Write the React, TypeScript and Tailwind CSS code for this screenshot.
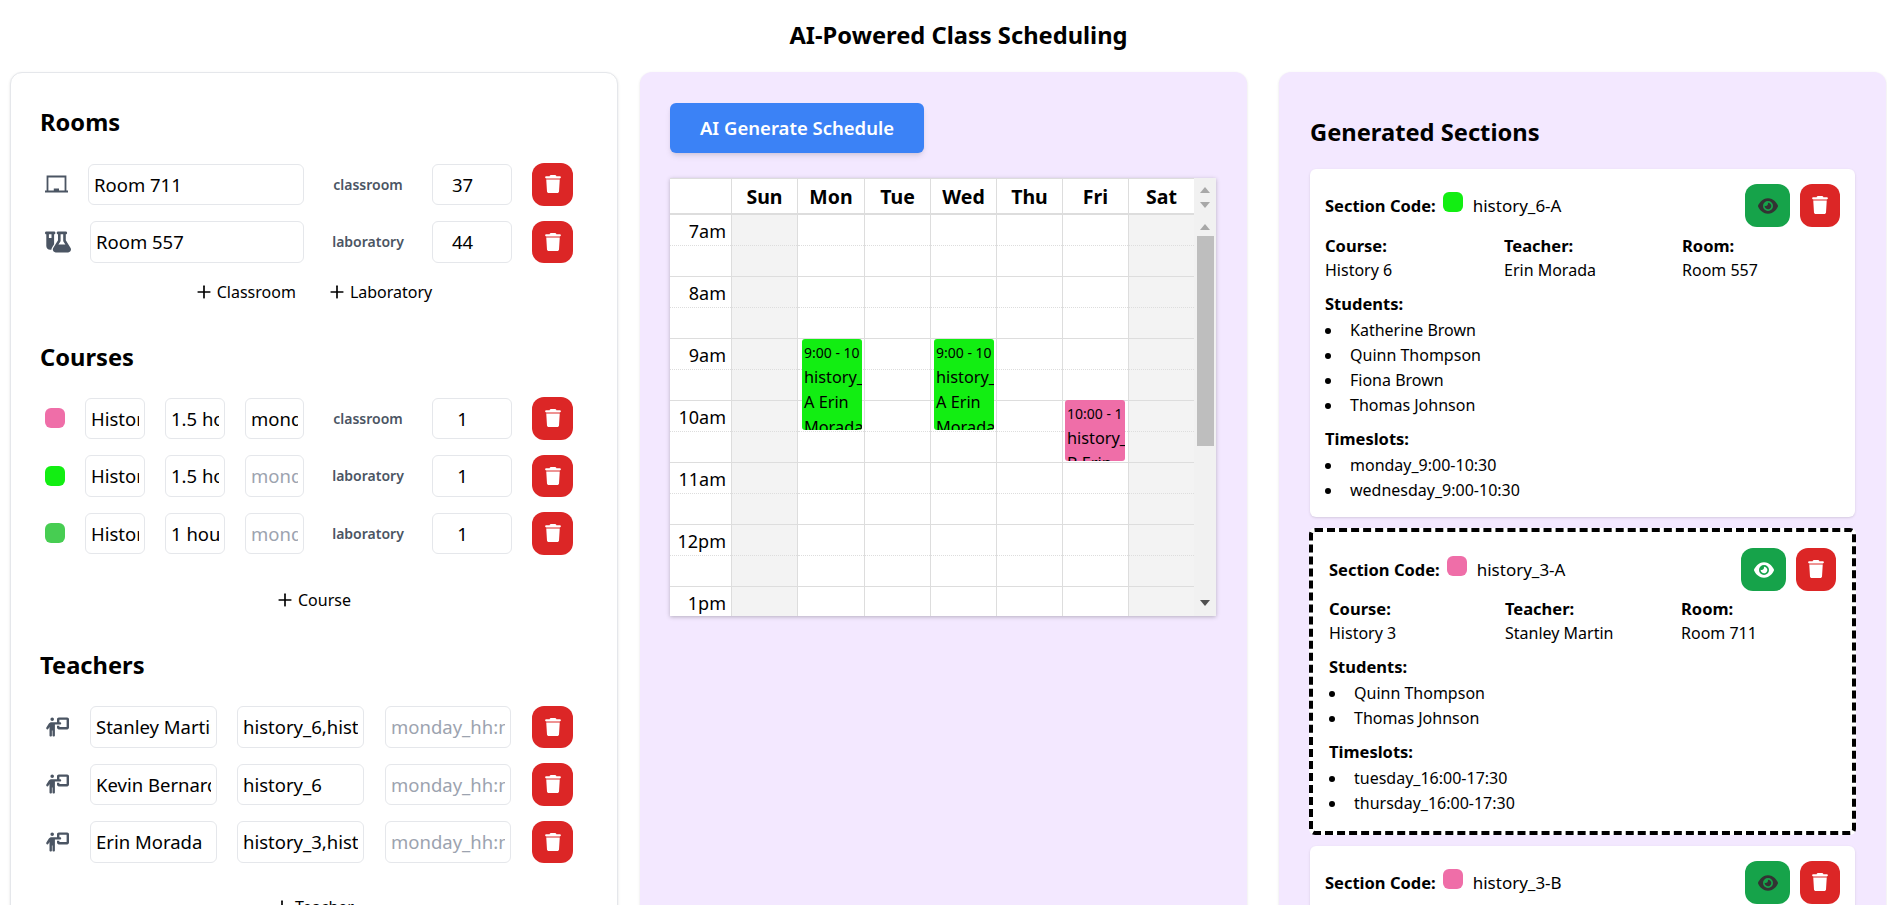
import React from "react";
import { FaTrash, FaEye, FaFlaskVial, FaPersonChalkboard } from "react-icons/fa6";
import { Plus } from "lucide-react";

const fontStyle = "font-['Noto_Sans',sans-serif]";
const inputCls =
  "min-w-0 h-[41.5px] border border-[#e5e7eb] rounded-md px-[5px] text-[18.5px] text-black placeholder:text-[#9ca3af] bg-white outline-none";

function TrashBtn({ extra = "w-[41px]" }: { extra?: string }) {
  return (
    <button className={`${extra} h-[42.5px] flex-none rounded-xl bg-[#dc2626] flex items-center justify-center text-white`}>
      <FaTrash size={18} />
    </button>
  );
}

function LaptopIcon() {
  return (
    <svg width="23" height="18" viewBox="0 0 23 18" className="text-[#4b5563]" fill="none">
      <path d="M2.5 16V1.5H20.5V16" stroke="currentColor" strokeWidth="1.8" />
      <path d="M0 15.6H8.8V13.4H14V15.6H23V17.6H0Z" fill="currentColor" />
    </svg>
  );
}

function Label({ children }: { children: React.ReactNode }) {
  return <div className="w-[88px] flex-none text-center text-[14px] font-semibold text-[#4b5563]">{children}</div>;
}

function Capacity({ value }: { value: string }) {
  return <input readOnly value={value} className={`${inputCls} w-[80px] flex-none text-center pr-[24px]`} />;
}

function Swatch({ color }: { color: string }) {
  return <div className={`w-5 h-5 rounded-md flex-none ${color}`} />;
}

function AddBtn({ label }: { label: string }) {
  return (
    <button className="flex items-center gap-[3px] text-[16px] text-black">
      <Plus size={20} strokeWidth={2} />
      {label}
    </button>
  );
}

function RoomRow({ icon, w, name, type, cap, ml }: { icon: React.ReactNode; w: string; name: string; type: string; cap: string; ml: string }) {
  return (
    <div className="flex items-center h-[42.5px]">
      <div className={`${ml} flex-none flex items-center pl-[5px]`}>{icon}</div>
      <input readOnly value={name} className={`${inputCls} ${w} flex-none`} />
      <div className="w-[128px] flex-none flex justify-center"><Label>{type}</Label></div>
      <Capacity value={cap} />
      <div className="w-5 flex-none" />
      <TrashBtn />
    </div>
  );
}

function CourseRow({ color, name, dur, day, type }: { color: string; name: string; dur: string; day: string; type: string }) {
  return (
    <div className="flex items-center h-[42.5px]">
      <div className="w-[45px] flex-none pl-[5px]"><Swatch color={color} /></div>
      <div className="flex gap-5 flex-none">
        <input readOnly value={name} className={`${inputCls} w-[60px]`} />
        <input readOnly value={dur} className={`${inputCls} w-[60px]`} />
        <input readOnly value={day} placeholder="monday_hh:mm-hh:mm" className={`${inputCls} w-[59px]`} />
      </div>
      <div className="w-[128px] flex-none flex justify-center"><Label>{type}</Label></div>
      <Capacity value="1" />
      <div className="w-5 flex-none" />
      <TrashBtn />
    </div>
  );
}

function TeacherRow({ name, courses }: { name: string; courses: string }) {
  return (
    <div className="flex items-center h-[42.5px]">
      <div className="w-[50px] flex-none pl-[5px] text-[#4b5563]"><FaPersonChalkboard size={24} /></div>
      <input readOnly value={name} className={`${inputCls} w-[127px] flex-none`} />
      <input readOnly value={courses} className={`${inputCls} ml-5 w-[127px] flex-none`} />
      <input readOnly placeholder="monday_hh:mm-hh:mm" className={`${inputCls} ml-[21px] w-[126px] flex-none`} />
      <div className="w-[21px] flex-none" />
      <TrashBtn />
    </div>
  );
}

function Heading({ children, className = "" }: { children: React.ReactNode; className?: string }) {
  return <h2 className={`text-[23.7px] leading-8 font-bold text-black ${className}`}>{children}</h2>;
}

function LeftPanel() {
  return (
    <div className="w-[608px] flex-none bg-white border border-[#e5e7eb] rounded-xl shadow-sm pt-[33px] pl-[29px]">
      <Heading>Rooms</Heading>
      <div className="mt-[25px] flex flex-col gap-[15px]">
        <RoomRow icon={<LaptopIcon />} ml="w-[48px]" w="w-[216px]" name="Room 711" type="classroom" cap="37" />
        <RoomRow icon={<FaFlaskVial size={26} className="text-[#4b5563]" />} ml="w-[50px]" w="w-[214px]" name="Room 557" type="laboratory" cap="44" />
      </div>
      <div className="mt-[17px] h-[24px] flex justify-center gap-[31px] pr-[31px]">
        <AddBtn label="Classroom" />
        <AddBtn label="Laboratory" />
      </div>
      <Heading className="mt-[37px]">Courses</Heading>
      <div className="mt-[24px] flex flex-col gap-[15px]">
        <CourseRow color="bg-[#ef6ea8]" name="History 3" dur="1.5 hours" day="monday_9:00" type="classroom" />
        <CourseRow color="bg-[#12ee12]" name="History 6" dur="1.5 hours" day="" type="laboratory" />
        <CourseRow color="bg-[#47cd52]" name="History 7" dur="1 hour" day="" type="laboratory" />
      </div>
      <div className="mt-[33px] h-[24px] flex justify-center pr-[31px]">
        <AddBtn label="Course" />
      </div>
      <Heading className="mt-[37px]">Teachers</Heading>
      <div className="mt-[25px] flex flex-col gap-[15px]">
        <TeacherRow name="Stanley Martin" courses="history_6,history_3" />
        <TeacherRow name="Kevin Bernard" courses="history_6" />
        <TeacherRow name="Erin Morada" courses="history_3,history_6" />
      </div>
      <div className="mt-[32px] h-[24px] flex justify-center pr-[31px]">
        <AddBtn label="Teacher" />
      </div>
    </div>
  );
}

const days = ["Sun", "Mon", "Tue", "Wed", "Thu", "Fri", "Sat"];
const hours = ["7am", "8am", "9am", "10am", "11am", "12pm", "1pm"];

function Event({ color, pos, time, lines }: { color: string; pos: string; time: string; lines: string[] }) {
  return (
    <div className={`absolute w-[60px] ${pos} ${color} rounded-[3px] overflow-hidden pl-[2px] pt-[1px] text-black`}>
      <div className="w-[56px] text-[14px] leading-[25px] whitespace-nowrap overflow-hidden">{time}</div>
      {lines.map((l) => (
        <div key={l} className="text-[16.3px] leading-[25px] whitespace-nowrap">{l}</div>
      ))}
    </div>
  );
}

function DayColumn({ day }: { day: string }) {
  const weekend = day === "Sun" || day === "Sat";
  return (
    <div className={`relative flex-none ${day === "Mon" ? "w-[67px]" : "w-[66px]"} border-l border-[#ddd] ${weekend ? "bg-[#f3f3f3]" : "bg-white"}`}>
      {hours.map((h) => (
        <React.Fragment key={h}>
          <div className="h-[31px] border-b border-dotted border-[#ddd]" />
          <div className="h-[31px] border-b border-[#ddd]" />
        </React.Fragment>
      ))}
      {day === "Mon" && (
        <Event color="bg-[#12ee12]" pos="left-[4px] top-[124px] h-[91px]" time="9:00 - 10:30" lines={["history_6-", "A Erin", "Morada"]} />
      )}
      {day === "Wed" && (
        <Event color="bg-[#12ee12]" pos="left-[3px] top-[124px] h-[91px]" time="9:00 - 10:30" lines={["history_6-", "A Erin", "Morada"]} />
      )}
      {day === "Fri" && (
        <Event color="bg-[#ef6ea8]" pos="left-[2px] top-[185px] h-[61px]" time="10:00 - 11:00" lines={["history_3-", "B Erin", "Morada"]} />
      )}
    </div>
  );
}

function Tri({ up, color }: { up?: boolean; color: string }) {
  return (
    <svg width="10" height="6" viewBox="0 0 10 6" fill={color} className="block mx-auto">
      <path d={up ? "M5 0L10 6H0Z" : "M0 0H10L5 6Z"} />
    </svg>
  );
}

function Scrollbar() {
  return (
    <div className="w-[22px] flex-none bg-[#f1f1f1] flex flex-col items-center pt-[9px]">
      <Tri up color="#a8a8a8" />
      <div className="mt-[9px]"><Tri color="#a8a8a8" /></div>
      <div className="mt-[16px]"><Tri up color="#a8a8a8" /></div>
      <div className="mt-[6px] w-[17px] h-[210px] bg-[#bebebe]" />
      <div className="mt-[154px]"><Tri color="#505050" /></div>
    </div>
  );
}

function Calendar() {
  return (
    <div className="mt-[25px] w-[546px] h-[438px] flex bg-white shadow-[0_1px_4px_rgba(0,0,0,0.25)] overflow-hidden">
      <div className="w-[524px] flex-none flex flex-col border-t border-[#ddd]">
        <div className="flex h-[36px] flex-none border-b-2 border-[#ddd] bg-white">
          <div className="w-[61px] flex-none" />
          {days.map((d) => (
            <div key={d} className={`${d === "Mon" ? "w-[67px]" : "w-[66px]"} flex-none border-l border-[#ddd] flex items-center justify-center pt-[2px] text-[19.5px] font-bold text-black`}>
              {d}
            </div>
          ))}
        </div>
        <div className="flex flex-1 overflow-hidden">
          <div className="w-[61px] flex-none">
            {hours.map((h) => (
              <div key={h} className="h-[62px] pr-[5px] pt-[2px] text-right text-[18px] leading-[28px] text-black border-b border-transparent relative">
                {h}
                <div className="absolute left-0 right-0 top-[30px] border-b border-dotted border-[#ddd]" />
                <div className="absolute left-0 right-0 top-[61px] border-b border-[#ddd]" />
              </div>
            ))}
          </div>
          {days.map((d) => (
            <DayColumn key={d} day={d} />
          ))}
        </div>
      </div>
      <Scrollbar />
    </div>
  );
}

function MiddlePanel() {
  return (
    <div className="w-[607px] flex-none bg-[#f3e8ff] rounded-xl shadow-sm pt-[31px] pl-[30px]">
      <button className="w-[254px] h-[50px] rounded-md bg-[#3b82f6] text-white text-[18.5px] font-semibold shadow-md">
        AI Generate Schedule
      </button>
      <Calendar />
    </div>
  );
}

function Dot() {
  return <span className="w-[6px] h-[6px] rounded-full bg-black flex-none mt-[10px] mr-[19px]" />;
}

function SectionCard({
  selected,
  color,
  code,
  course,
  teacher,
  room,
  students,
  slots,
}: {
  selected?: boolean;
  color: string;
  code: string;
  course: string;
  teacher: string;
  room: string;
  students: string[];
  slots: string[];
}) {
  return (
    <div
      className={
        selected
          ? "-mx-px bg-white rounded-md border-4 border-dashed border-black pt-4 pb-[15px] pl-4 pr-4 text-[16px] leading-[25px] text-black"
          : "bg-white rounded-md shadow-sm pt-[15px] pb-[14px] pl-[15px] pr-[15px] text-[16px] leading-[25px] text-black"
      }
    >
      <div className="flex items-center h-[43px]">
        <span className="font-bold text-[16.5px]">Section Code:</span>
        <span className={`ml-[7px] w-5 h-5 rounded-md -mt-[8px] ${color}`} />
        <span className="ml-[10px] text-[17px]">{code}</span>
        <div className="ml-auto flex gap-[10px]">
          <button className={`w-[45px] h-[43px] rounded-xl bg-[#16a34a] flex items-center justify-center ${selected ? "text-white" : "text-[#333333]"}`}>
            <FaEye size={20} />
          </button>
          <TrashBtn extra="w-[40px]" />
        </div>
      </div>
      <div className={`grid ${selected ? "mt-[5px] grid-cols-[176px_176px_1fr]" : "mt-[6px] grid-cols-[179px_178px_1fr]"}`}>
        <div>
          <div className="font-bold text-[16.5px]">Course:</div>
          <div>{course}</div>
        </div>
        <div>
          <div className="font-bold text-[16.5px]">Teacher:</div>
          <div>{teacher}</div>
        </div>
        <div>
          <div className="font-bold text-[16.5px]">Room:</div>
          <div>{room}</div>
        </div>
      </div>
      <div className="mt-[8px] font-bold text-[16.5px]">Students:</div>
      <ul className="mt-[2px]">
        {students.map((s) => (
          <li key={s} className="flex">
            <Dot />
            {s}
          </li>
        ))}
      </ul>
      <div className="mt-[8px] font-bold text-[16.5px]">Timeslots:</div>
      <ul className="mt-[2px]">
        {slots.map((s) => (
          <li key={s} className="flex">
            <Dot />
            {s}
          </li>
        ))}
      </ul>
    </div>
  );
}

function RightPanel() {
  return (
    <div className="w-[607px] flex-none bg-[#f3e8ff] rounded-xl shadow-sm pt-[44px] px-[31px]">
      <Heading>Generated Sections</Heading>
      <div className="mt-[21px] flex flex-col gap-[11px]">
        <SectionCard
          color="bg-[#12ee12]"
          code="history_6-A"
          course="History 6"
          teacher="Erin Morada"
          room="Room 557"
          students={["Katherine Brown", "Quinn Thompson", "Fiona Brown", "Thomas Johnson"]}
          slots={["monday_9:00-10:30", "wednesday_9:00-10:30"]}
        />
        <SectionCard
          selected
          color="bg-[#ef6ea8]"
          code="history_3-A"
          course="History 3"
          teacher="Stanley Martin"
          room="Room 711"
          students={["Quinn Thompson", "Thomas Johnson"]}
          slots={["tuesday_16:00-17:30", "thursday_16:00-17:30"]}
        />
        <SectionCard
          color="bg-[#ef6ea8]"
          code="history_3-B"
          course="History 3"
          teacher="Kevin Bernard"
          room="Room 557"
          students={["Katherine Brown", "Fiona Brown"]}
          slots={["friday_10:00-11:00"]}
        />
      </div>
    </div>
  );
}

export default function App() {
  return (
    <div className={`h-screen overflow-hidden bg-white ${fontStyle}`}>
      <h1 className="h-[72px] flex items-center justify-center pl-[30px] text-[23.7px] font-bold text-black">
        AI-Powered Class Scheduling
      </h1>
      <div className="flex pl-[10px]">
        <LeftPanel />
        <div className="w-[22px] flex-none" />
        <MiddlePanel />
        <div className="w-[32px] flex-none" />
        <RightPanel />
      </div>
    </div>
  );
}
